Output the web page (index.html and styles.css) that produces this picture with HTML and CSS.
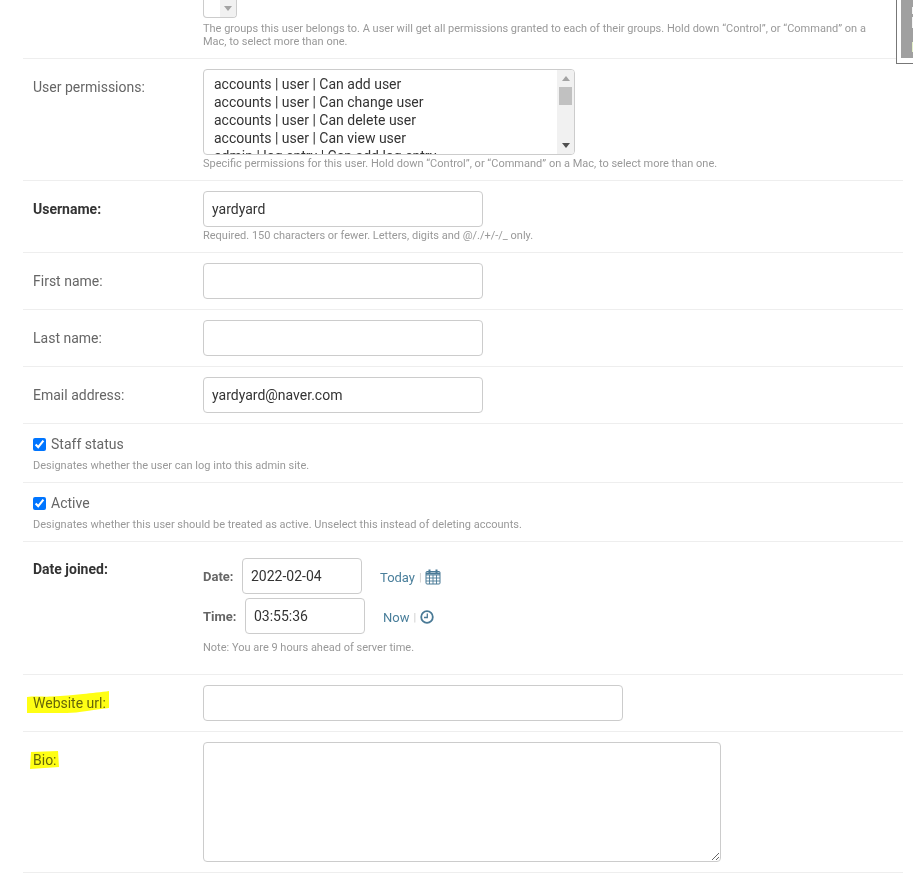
FILE: index.html
```html
<!DOCTYPE html>
<html lang="en">
<head>
<meta charset="utf-8">
<title>Change user</title>
<link rel="stylesheet" href="styles.css">
</head>
<body>
<div class="thumb" aria-hidden="true"><div class="thumb-img"><i class="t1"></i><i class="t2"></i><i class="t3"></i></div></div>
<form class="form">
  <div class="row row-groups">
    <div class="label"></div>
    <div class="field">
      <div class="groups-select"><div class="groups-bar"><svg width="8" height="5" viewBox="0 0 8 5"><path d="M0 0h8L4 5z" fill="#a3a3a3"/></svg></div></div>
      <p class="help help-wide">The groups this user belongs to. A user will get all permissions granted to each of their groups. Hold down “Control”, or “Command” on a Mac, to select more than one.</p>
    </div>
  </div>
  <div class="row">
    <div class="label">User permissions:</div>
    <div class="field">
      <div class="multi">
        <div class="multi-options">
          <div>accounts | user | Can add user</div>
          <div>accounts | user | Can change user</div>
          <div>accounts | user | Can delete user</div>
          <div>accounts | user | Can view user</div>
          <div>admin | log entry | Can add log entry</div>
        </div>
        <div class="scrollbar">
          <svg class="arrow-up" width="8" height="5" viewBox="0 0 8 5"><path d="M4 0l4 5H0z" fill="#a3a3a3"/></svg>
          <div class="scroll-thumb"></div>
          <svg class="arrow-down" width="8" height="5" viewBox="0 0 8 5"><path d="M0 0h8L4 5z" fill="#505050"/></svg>
        </div>
      </div>
      <p class="help">Specific permissions for this user. Hold down “Control”, or “Command” on a Mac, to select more than one.</p>
    </div>
  </div>
  <div class="row">
    <div class="label label-strong">Username:</div>
    <div class="field">
      <input class="input" type="text" value="yardyard">
      <p class="help">Required. 150 characters or fewer. Letters, digits and @/./+/-/_ only.</p>
    </div>
  </div>
  <div class="row">
    <div class="label">First name:</div>
    <div class="field"><input class="input" type="text"></div>
  </div>
  <div class="row">
    <div class="label">Last name:</div>
    <div class="field"><input class="input" type="text"></div>
  </div>
  <div class="row">
    <div class="label">Email address:</div>
    <div class="field"><input class="input" type="text" value="yardyard@naver.com"></div>
  </div>
  <div class="row row-check">
    <label class="check"><input type="checkbox" checked>Staff status</label>
    <p class="help">Designates whether the user can log into this admin site.</p>
  </div>
  <div class="row row-check">
    <label class="check"><input type="checkbox" checked>Active</label>
    <p class="help">Designates whether this user should be treated as active. Unselect this instead of deleting accounts.</p>
  </div>
  <div class="row row-date">
    <div class="label label-strong label-date">Date joined:</div>
    <div class="field">
      <div class="dt-line">
        <span class="dt-label">Date:</span>
        <input class="input input-dt" type="text" value="2022-02-04">
        <span class="dt-links"><a href="#">Today</a><span class="sep">|</span><svg class="cal" width="16" height="16" viewBox="0 0 16 16" fill="none" stroke="#4a7a96"><rect x="1" y="2.500" width="14" height="12.500" rx="1"/><path d="M1 6h14M1 9h14M1 12h14M4.500 6v9M8 6v9M11.500 6v9" stroke-width=".9"/><path d="M1 4.500h14" stroke-width="2"/><path d="M4.500 .5v3.500M11.500 .5v3.500" stroke-width="2"/></svg></span>
      </div>
      <div class="dt-line">
        <span class="dt-label">Time:</span>
        <input class="input input-dt" type="text" value="03:55:36">
        <span class="dt-links"><a href="#">Now</a><span class="sep">|</span><svg width="14" height="14" viewBox="0 0 14 14" fill="none" stroke="#4a7a96"><circle cx="7" cy="7" r="5.800" stroke-width="1.800"/><path d="M7.300 3.500V7.500H4" stroke-width="1.300"/></svg></span>
      </div>
      <p class="help help-note">Note: You are 9 hours ahead of server time.</p>
    </div>
  </div>
  <div class="row">
    <div class="label"><span class="marked">Website url:<svg class="marker marker-url" width="82" height="23" viewBox="0 0 82 23"><path d="M0 6C8 5 18 6 25 5.500 36 5 46 4 56 3 64 2 75 1 82 0V17C74 18 66 19 60 20 52 21 46 22 40 22H0Z" fill="#ffff14"/></svg></span></div>
    <div class="field"><input class="input input-url" type="text"></div>
  </div>
  <div class="row">
    <div class="label"><span class="marked">Bio:<svg class="marker marker-bio" width="29" height="18" viewBox="0 0 29 18"><path d="M1 1L28 0 29 16 0 18Z" fill="#ffff14"/></svg></span></div>
    <div class="field"><textarea class="textarea"></textarea></div>
  </div>
</form>
</body>
</html>
```
FILE: styles.css
```css
* { box-sizing: border-box; }
html, body { margin: 0; padding: 0; }
body {
  background: #fff;
  color: #666;
  font-family: Roboto, "Liberation Sans", sans-serif;
  font-size: 14px;
  overflow: hidden;
  position: relative;
}
.form {
  margin-left: 23px;
  width: 880px;
}
.row {
  display: flex;
  padding: 10px;
  border-bottom: 1px solid #eee;
}
.row-groups {
  height: 59px;
  padding-top: 0;
}
.row-check {
  display: block;
  height: 59px;
}
.row-date {
  padding-top: 16px;
  padding-bottom: 20px;
}
.label {
  flex: 0 0 170px;
  line-height: 18px;
  padding-top: 9px;
}
.label-strong {
  color: #333;
  font-weight: 700;
}
.label-date {
  padding-top: 2px;
}
.field {
  min-width: 0;
  flex: 1;
}
.input {
  display: block;
  width: 280px;
  height: 36px;
  padding: 0 8px;
  border: 1px solid #ccc;
  border-radius: 4px;
  background: #fff;
  color: #333;
  font: 14px Roboto, "Liberation Sans", sans-serif;
}
.input-url { width: 420px; }
.input-dt { width: 120px; }
.textarea {
  display: block;
  width: 518px;
  height: 120px;
  border: 1px solid #ccc;
  border-radius: 4px;
  padding: 8px;
  font: 14px Roboto, "Liberation Sans", sans-serif;
}
.help {
  margin: 2px 0 0;
  color: #999;
  font-size: 11px;
  line-height: 13px;
}
.help-wide { margin-top: 4px; width: 680px; }
.help-note { margin-top: 7px; }
.groups-select {
  display: flex;
  justify-content: flex-end;
  width: 34px;
  height: 18px;
  border: 1px solid #ccc;
  border-top: 0;
  border-radius: 0 0 4px 4px;
  overflow: hidden;
}
.groups-bar {
  display: flex;
  align-items: center;
  justify-content: center;
  width: 16px;
  background: #f1f1f1;
}
.multi {
  display: flex;
  width: 372px;
  height: 86px;
  border: 1px solid #ccc;
  border-radius: 4px;
  overflow: hidden;
}
.multi-options {
  flex: 1;
  padding-left: 10px;
  padding-top: 5px;
  color: #333;
  line-height: 18px;
  white-space: nowrap;
  overflow: hidden;
}
.scrollbar {
  display: flex;
  flex-direction: column;
  align-items: center;
  flex: 0 0 17px;
  background: #f1f1f1;
}
.arrow-up { margin-top: 6px; }
.scroll-thumb {
  width: 13px;
  height: 18px;
  margin-top: 6px;
  background: #c1c1c1;
}
.arrow-down { margin-top: auto; margin-bottom: 6px; }
.check {
  display: flex;
  align-items: center;
  height: 21px;
  line-height: 21px;
}
.check input {
  width: 13px;
  height: 13px;
  margin: 0 5px 0 0;
}
.row-check .help { margin-top: 4px; }
.dt-line {
  display: flex;
  align-items: center;
  margin-bottom: 4px;
}
.dt-label {
  margin-right: 8.5px;
  color: #666;
  font-size: 13px;
  font-weight: 700;
}
.dt-links {
  display: flex;
  align-items: center;
  margin-left: 18px;
  padding-top: 2px;
  font-size: 13px;
}
.dt-links a {
  color: #4a7f9b;
  text-decoration: none;
}
.sep {
  margin: 0 4px;
  color: #ccc;
  font-size: 11px;
}
.cal { margin-left: -1px; }
.marked { position: relative; }
.marker {
  position: absolute;
  mix-blend-mode: multiply;
  pointer-events: none;
}
.marker-url { left: -6px; top: -4px; }
.marker-bio { left: -3px; top: -1px; }
.thumb {
  position: absolute;
  top: 0;
  left: 896px;
  width: 17px;
  height: 64px;
  padding: 0 0 5px 4px;
  border-left: 1px solid #777;
  border-bottom: 1px solid #777;
  background: #fff;
}
.thumb-img {
  position: relative;
  height: 100%;
  background: #a0a0a0;
}
.thumb-img i {
  position: absolute;
  left: 11px;
  width: 2px;
}
.t1 { top: 7px; height: 7px; background: #f4f4f4; }
.t2 { top: 17px; height: 11px; background: #f4f4f4; }
.t3 { top: 42px; height: 10px; background: #e4f0c8; }
```
